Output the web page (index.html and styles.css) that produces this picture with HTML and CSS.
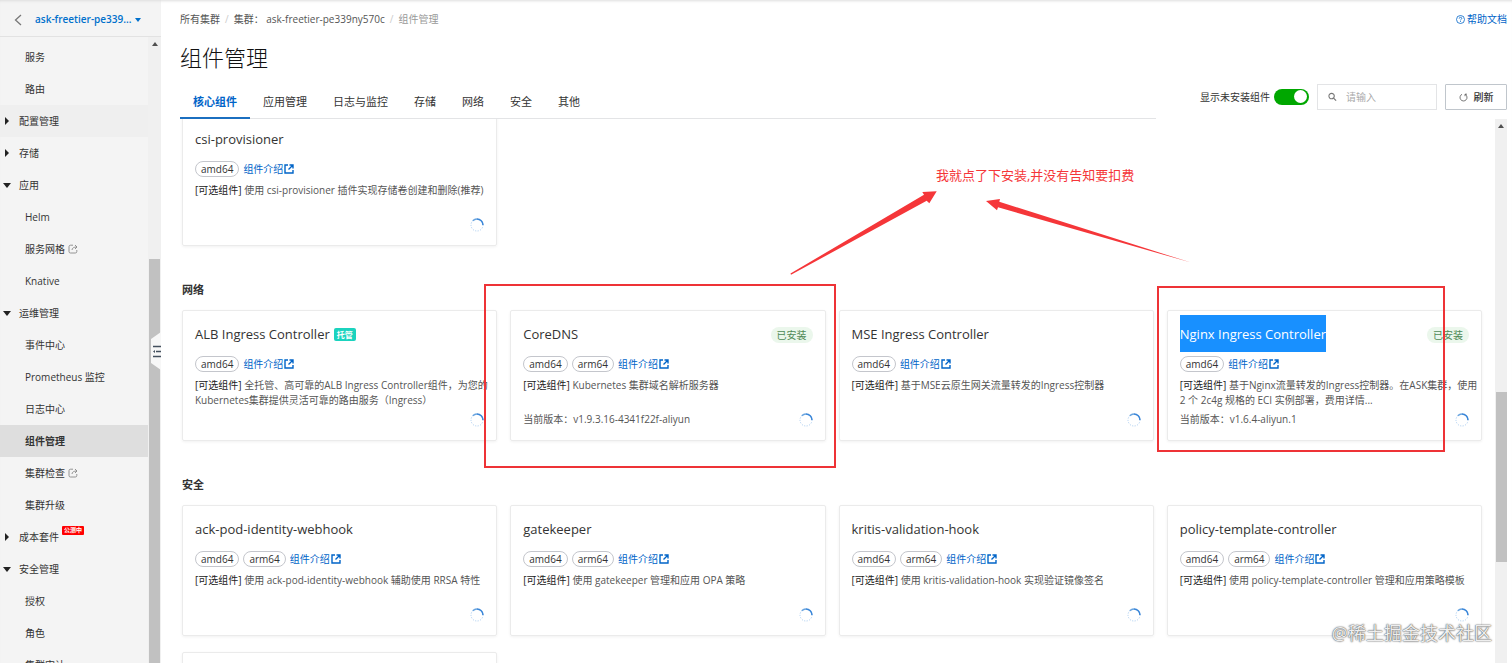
FILE: index.html
```html
<!DOCTYPE html>
<html lang="zh-CN">
<head>
    <meta charset="UTF-8">
    <meta name="viewport" content="width=device-width, initial-scale=1.0">
    <title>组件管理</title>
    <link rel="stylesheet" href="styles.css">
</head>
<body>
    <svg class="sprite" aria-hidden="true">
        <symbol id="icon-open" viewBox="0 0 10 10">
            <path d="M4 1H1v8h8V6M5.5 1H9v3.500M9 1 4.500 5.500" fill="none" stroke="currentColor" stroke-width="1.400"/>
        </symbol>
        <symbol id="icon-share" viewBox="0 0 10 10">
            <path d="M5 1.200H2.500Q1 1.200 1 2.700v4.800Q1 9 2.500 9h4.800Q8.800 9 8.800 7.500V6M4 6Q4.200 3 8.800 3M7 1l2 2-2 2" fill="none" stroke="currentColor" stroke-width="0.900"/>
        </symbol>
        <symbol id="icon-spin" viewBox="0 0 14 14">
            <circle cx="7" cy="7" r="6" fill="none" stroke="#a3c9f0" stroke-width="1" stroke-dasharray="1 1.500"/>
            <path d="M2.800 2.800A6 6 0 0 1 7 1" fill="none" stroke="#6aa5e0" stroke-width="1.400"/>
            <path d="M7 1a6 6 0 0 1 6 6" fill="none" stroke="#3a86d8" stroke-width="1.600"/>
        </symbol>
    </svg>

    <div class="layout">
        <aside class="sidebar">
            <div class="cluster">
                <button class="back" aria-label="返回">
                    <svg width="8" height="12" viewBox="0 0 8 12"><path d="M7 1 1.500 6 7 11" fill="none" stroke="#777" stroke-width="1.300"/></svg>
                </button>
                <button class="cluster-name">ask-freetier-pe339...<span class="caret"></span></button>
            </div>
            <div class="sidebar-body">
                <nav class="menu">
                    <a href="#" class="sub">服务</a>
                    <a href="#" class="sub">路由</a>
                    <a href="#" class="group closed hover">配置管理</a>
                    <a href="#" class="group closed">存储</a>
                    <a href="#" class="group">应用</a>
                    <a href="#" class="sub">Helm</a>
                    <a href="#" class="sub">服务网格<svg class="share"><use href="#icon-share"/></svg></a>
                    <a href="#" class="sub">Knative</a>
                    <a href="#" class="group">运维管理</a>
                    <a href="#" class="sub">事件中心</a>
                    <a href="#" class="sub">Prometheus 监控</a>
                    <a href="#" class="sub">日志中心</a>
                    <a href="#" class="sub active">组件管理</a>
                    <a href="#" class="sub">集群检查<svg class="share"><use href="#icon-share"/></svg></a>
                    <a href="#" class="sub">集群升级</a>
                    <a href="#" class="group closed">成本套件<span class="beta">公测中</span></a>
                    <a href="#" class="group">安全管理</a>
                    <a href="#" class="sub">授权</a>
                    <a href="#" class="sub">角色</a>
                    <a href="#" class="sub">集群审计</a>
                </nav>
                <div class="scrollbar">
                    <span class="arrow-up"></span>
                    <span class="thumb thumb-menu"></span>
                </div>
            </div>
            <button class="collapse" aria-label="收起">
                <svg width="12" height="38" viewBox="0 0 12 38">
                    <path d="M12 0 2 7v24l10 7z" fill="#f7f7f7"/>
                    <path d="M4 14.500h8M7 19.500h5M4 24.500h8" stroke="#44505e" stroke-width="1.500"/>
                    <path d="M4 19.500l2-1.500v3z" fill="#44505e"/>
                </svg>
            </button>
        </aside>

        <main class="main">
            <div class="topline">
                <div class="breadcrumb">
                    <a href="#">所有集群</a><i>/</i><a href="#">集群： ask-freetier-pe339ny570c</a><i>/</i><span>组件管理</span>
                </div>
                <a href="#" class="help">
                    <svg width="9" height="9" viewBox="0 0 9 9"><circle cx="4.500" cy="4.500" r="4" fill="none" stroke="currentColor" stroke-width="0.800"/><path d="M3.200 3.600q.1-1.300 1.300-1.300t1.300 1.100q0 .7-1.300 1.500v.4M4.500 6v.9" fill="none" stroke="currentColor" stroke-width="0.800"/></svg>
                    帮助文档
                </a>
            </div>
            <h1>组件管理</h1>

            <div class="toolbar">
                <div class="tabs">
                    <button class="tab active">核心组件</button>
                    <button class="tab">应用管理</button>
                    <button class="tab">日志与监控</button>
                    <button class="tab">存储</button>
                    <button class="tab">网络</button>
                    <button class="tab">安全</button>
                    <button class="tab">其他</button>
                </div>
                <div class="tools">
                    <label for="show-all">显示未安装组件</label>
                    <input type="checkbox" id="show-all" class="switch" checked>
                    <div class="search">
                        <svg width="10" height="10" viewBox="0 0 10 10"><circle cx="4" cy="4" r="3" fill="none" stroke="#777" stroke-width="1.200"/><path d="M6.200 6.200 9 9" stroke="#777" stroke-width="1.400"/></svg>
                        <input type="text" placeholder="请输入" aria-label="搜索">
                    </div>
                    <button class="refresh">
                        <svg width="9" height="9" viewBox="0 0 9 9"><path d="M3 1.300a3.500 3.500 0 1 0 3.200.1M6 3.200V1.200h2" fill="none" stroke="#555" stroke-width="0.800"/></svg>
                        刷新
                    </button>
                </div>
            </div>

            <div class="content">
                <div class="list">
                    <div class="cards cards-scrolled">
                        <article class="card">
                            <header><h3>csi-provisioner</h3></header>
                            <div class="tags"><span class="tag">amd64</span><a href="#">组件介绍<svg><use href="#icon-open"/></svg></a></div>
                            <p><b>[可选组件]</b> 使用 csi-provisioner 插件实现存储卷创建和删除(推荐)</p>
                            <footer><span></span><svg class="spin"><use href="#icon-spin"/></svg></footer>
                        </article>
                    </div>

                    <h2>网络</h2>
                    <div class="cards">
                        <article class="card">
                            <header><h3>ALB Ingress Controller<span class="managed">托管</span></h3></header>
                            <div class="tags"><span class="tag">amd64</span><a href="#">组件介绍<svg><use href="#icon-open"/></svg></a></div>
                            <p><b>[可选组件]</b> 全托管、高可靠的ALB Ingress Controller组件，为您的<br>Kubernetes集群提供灵活可靠的路由服务（Ingress）</p>
                            <footer><span></span><svg class="spin"><use href="#icon-spin"/></svg></footer>
                        </article>
                        <article class="card">
                            <header><h3>CoreDNS</h3><span class="installed">已安装</span></header>
                            <div class="tags"><span class="tag">amd64</span><span class="tag">arm64</span><a href="#">组件介绍<svg><use href="#icon-open"/></svg></a></div>
                            <p><b>[可选组件]</b> Kubernetes 集群域名解析服务器</p>
                            <footer><span>当前版本：v1.9.3.16-4341f22f-aliyun</span><svg class="spin"><use href="#icon-spin"/></svg></footer>
                        </article>
                        <article class="card">
                            <header><h3>MSE Ingress Controller</h3></header>
                            <div class="tags"><span class="tag">amd64</span><a href="#">组件介绍<svg><use href="#icon-open"/></svg></a></div>
                            <p><b>[可选组件]</b> 基于MSE云原生网关流量转发的Ingress控制器</p>
                            <footer><span></span><svg class="spin"><use href="#icon-spin"/></svg></footer>
                        </article>
                        <article class="card">
                            <header><h3 class="selected">Nginx Ingress Controller</h3><span class="installed">已安装</span></header>
                            <div class="tags"><span class="tag">amd64</span><a href="#">组件介绍<svg><use href="#icon-open"/></svg></a></div>
                            <p><b>[可选组件]</b> 基于Nginx流量转发的Ingress控制器。在ASK集群，使用<br>2 个 2c4g 规格的 ECI 实例部署，费用详情...</p>
                            <footer><span>当前版本：v1.6.4-aliyun.1</span><svg class="spin"><use href="#icon-spin"/></svg></footer>
                        </article>
                    </div>

                    <h2>安全</h2>
                    <div class="cards">
                        <article class="card">
                            <header><h3>ack-pod-identity-webhook</h3></header>
                            <div class="tags"><span class="tag">amd64</span><span class="tag">arm64</span><a href="#">组件介绍<svg><use href="#icon-open"/></svg></a></div>
                            <p><b>[可选组件]</b> 使用 ack-pod-identity-webhook 辅助使用 RRSA 特性</p>
                            <footer><span></span><svg class="spin"><use href="#icon-spin"/></svg></footer>
                        </article>
                        <article class="card">
                            <header><h3>gatekeeper</h3></header>
                            <div class="tags"><span class="tag">amd64</span><span class="tag">arm64</span><a href="#">组件介绍<svg><use href="#icon-open"/></svg></a></div>
                            <p><b>[可选组件]</b> 使用 gatekeeper 管理和应用 OPA 策略</p>
                            <footer><span></span><svg class="spin"><use href="#icon-spin"/></svg></footer>
                        </article>
                        <article class="card">
                            <header><h3>kritis-validation-hook</h3></header>
                            <div class="tags"><span class="tag">amd64</span><span class="tag">arm64</span><a href="#">组件介绍<svg><use href="#icon-open"/></svg></a></div>
                            <p><b>[可选组件]</b> 使用 kritis-validation-hook 实现验证镜像签名</p>
                            <footer><span></span><svg class="spin"><use href="#icon-spin"/></svg></footer>
                        </article>
                        <article class="card">
                            <header><h3>policy-template-controller</h3></header>
                            <div class="tags"><span class="tag">amd64</span><span class="tag">arm64</span><a href="#">组件介绍<svg><use href="#icon-open"/></svg></a></div>
                            <p><b>[可选组件]</b> 使用 policy-template-controller 管理和应用策略模板</p>
                            <footer><span></span><svg class="spin"><use href="#icon-spin"/></svg></footer>
                        </article>
                        <article class="card"></article>
                    </div>
                </div>
                <div class="scrollbar">
                    <span class="arrow-up"></span>
                    <span class="thumb thumb-list"></span>
                </div>
            </div>
        </main>
    </div>

    <!-- red marks drawn over the page -->
    <div class="mark mark-coredns"></div>
    <div class="mark mark-nginx"></div>
    <svg class="arrows" width="402" height="86" viewBox="0 0 402 86">
        <path d="M1 84.800 0.500 83.500 134 4.700 132.300 2 146.700 1.300 139.300 13.300 136.700 10.700z" fill="#f53639"/>
        <path d="M401 72.600 208 17.300 207 20.300 196 11 210 9 209.300 11.700z" fill="#f53639"/>
    </svg>
    <div class="note">我就点了下安装,并没有告知要扣费</div>
    <div class="watermark">@稀土掘金技术社区</div>
</body>
</html>
```
FILE: styles.css
```css
* {
    box-sizing: border-box;
}
body {
    margin: 0;
    height: 100vh;
    overflow: hidden;
    position: relative;
    font-family: "Open Sans", "Noto Sans CJK SC", sans-serif;
    font-size: 10px;
    line-height: 15px;
    color: #333;
    background-color: #fff;
}
a {
    color: inherit;
    text-decoration: none;
}
button {
    font: inherit;
    color: inherit;
    background: none;
    border: 0;
    padding: 0;
}
.sprite {
    position: absolute;
    width: 0;
    height: 0;
}
.layout {
    display: flex;
    height: 100%;
    box-shadow: inset 0 3px 3px -2px #ddd;
}

/* sidebar */
.sidebar {
    position: relative;
    flex: 0 0 161px;
    display: flex;
    flex-direction: column;
    background-color: #f4f4f4;
    box-shadow: inset 0 3px 3px -2px #ddd;
}
.cluster {
    display: flex;
    align-items: center;
    height: 37px;
    padding: 3px 0 0 14px;
    border-bottom: 1px solid #e2e2e2;
}
.back {
    display: flex;
    width: 21px;
}
.cluster-name {
    display: flex;
    align-items: center;
    gap: 4px;
    font-weight: 600;
    color: #0070cc;
}
.caret {
    border: 3px solid transparent;
    border-top: 4px solid #0070cc;
    border-bottom: 0;
}
.sidebar-body {
    flex: 1;
    display: flex;
    min-height: 0;
    overflow: hidden;
}
.menu {
    flex: 1;
    padding-top: 4px;
}
.menu a {
    display: flex;
    align-items: center;
    height: 32px;
}
.menu .sub {
    padding-left: 25px;
}
.menu .group {
    padding-left: 3px;
}
.menu .group::before {
    content: "";
    margin-right: 8px;
    border: 4px solid transparent;
    border-top: 5px solid #222;
    border-bottom: 0;
}
.menu .closed::before {
    margin: 0 10px 0 2px;
    border: 4px solid transparent;
    border-left: 4px solid #222;
    border-right: 0;
}
.menu .hover {
    background-color: #efefef;
}
.menu .active {
    background-color: #dedede;
    font-weight: 600;
}
.share {
    width: 10px;
    height: 10px;
    margin-left: 3px;
    color: #888;
}
.beta {
    align-self: flex-start;
    margin: 5px 0 0 3px;
    padding: 0 2px;
    font-size: 6px;
    line-height: 9px;
    font-weight: 600;
    color: #fff;
    background-color: #f00;
    border-radius: 1px;
}
.collapse {
    position: absolute;
    right: 0;
    top: 332px;
    width: 12px;
    height: 38px;
}
.collapse svg {
    display: block;
}

/* scrollbars */
.scrollbar {
    flex: 0 0 12px;
    display: flex;
    flex-direction: column;
    align-items: center;
    background-color: #f0f0f0;
}
.sidebar .scrollbar {
    flex-basis: 13px;
}
.arrow-up {
    margin-top: 5px;
    border: 3px solid transparent;
    border-bottom: 4px solid #505050;
    border-top: 0;
}
.thumb {
    width: 11px;
    background-color: #c1c1c1;
}
.thumb-menu {
    flex: 1;
    margin-top: 213px;
}
.thumb-list {
    height: 170px;
    margin-top: 264px;
}

/* main column */
.main {
    flex: 1;
    min-width: 0;
    display: flex;
    flex-direction: column;
    padding: 12px 5px 0 19px;
}
.topline {
    display: flex;
    justify-content: space-between;
}
.breadcrumb {
    color: #555;
}
.breadcrumb i {
    margin: 0 5px;
    font-style: normal;
    color: #ccc;
}
.breadcrumb span {
    color: #999;
}
.help {
    display: flex;
    align-items: center;
    gap: 2px;
    color: #0064c8;
}
h1 {
    margin: 13px 0 0;
    font-size: 22px;
    line-height: 34px;
    font-weight: 300;
    color: #111;
}
.toolbar {
    display: flex;
    align-items: flex-start;
    margin-top: 10px;
}
.tabs {
    flex: 1;
    display: flex;
    height: 35px;
    border-bottom: 1px solid #e3e4e6;
}
.tab {
    height: 35px;
    padding: 2px 13px 0;
    font-size: 11px;
    border-bottom: 2px solid transparent;
}
.tab.active {
    font-weight: 600;
    color: #0064c8;
    border-bottom-color: #1b6fc0;
}
.tools {
    display: flex;
    align-items: center;
    justify-content: flex-end;
    flex: 0 0 351px;
}
.switch {
    appearance: none;
    width: 35px;
    height: 16px;
    margin: 0 8px 0 4px;
    padding: 2px;
    background-color: #00a700;
    border-radius: 8px;
}
.switch::before {
    content: "";
    display: block;
    width: 13px;
    height: 13px;
    margin: -1px 0 0 auto;
    background-color: #fff;
    border-radius: 50%;
}
.search {
    display: flex;
    align-items: center;
    width: 120px;
    height: 26px;
    padding-left: 10px;
    border: 1px solid #e3e4e6;
}
.search input {
    width: 90px;
    margin-left: 9px;
    padding: 0;
    border: 0;
    outline: 0;
    font: inherit;
    background: none;
}
.search input::placeholder {
    color: #aaa;
}
.refresh {
    display: flex;
    align-items: center;
    justify-content: center;
    gap: 6px;
    width: 62px;
    height: 26px;
    margin-left: 8px;
    font-weight: 500;
    border: 1px solid #c0c6cc;
    border-radius: 1px;
}

/* component list */
.content {
    flex: 1;
    display: flex;
    min-height: 0;
    overflow: hidden;
}
.list {
    flex: 1;
    min-width: 0;
    padding: 0 13px 0 2px;
}
.cards {
    display: grid;
    grid-template-columns: repeat(4, 1fr);
    gap: 16px 13px;
}
.cards-scrolled {
    margin-top: -4px;
}
.card {
    display: flex;
    flex-direction: column;
    min-width: 0;
    height: 131px;
    padding: 4px 12px 13px;
    border: 1px solid #ebebeb;
    border-radius: 2px;
    box-shadow: 0 1px 3px rgba(0,0,0,0.06);
}
.card header {
    display: flex;
    align-items: center;
    justify-content: space-between;
}
h2 {
    margin: 36px 0 12px;
    font-size: 11px;
    line-height: 16px;
    font-weight: 600;
}
h3 {
    display: flex;
    align-items: center;
    height: 37px;
    margin: 0;
    padding-top: 1px;
    font-size: 13px;
    font-weight: 400;
}
.selected {
    color: #fff;
    background-color: #1890ff;
}
.managed {
    margin-left: 4px;
    padding: 0 3px;
    font-size: 8px;
    line-height: 13px;
    font-weight: 600;
    color: #fff;
    background-color: #1bd3be;
    border-radius: 2px;
}
.installed {
    margin-top: 2px;
    padding: 0 6px;
    line-height: 16px;
    color: #4f8a56;
    background-color: #ebf7ec;
    border-radius: 8px;
}
.tags {
    display: flex;
    align-items: center;
    gap: 4px;
    height: 16px;
    margin-top: 4px;
}
.tag {
    padding: 0 5px;
    line-height: 14px;
    border: 1px solid #c4c6cc;
    border-radius: 8px;
}
.tags a {
    display: flex;
    align-items: center;
    gap: 1px;
    color: #0064c8;
}
.tags a svg {
    width: 10px;
    height: 10px;
}
.card p {
    margin: 6px 0 0;
    white-space: nowrap;
    color: #555;
}
.card b {
    font-weight: 400;
    color: #222;
}
.card footer {
    display: flex;
    align-items: center;
    justify-content: space-between;
    height: 15px;
    margin-top: auto;
    color: #555;
}
.spin {
    width: 14px;
    height: 14px;
}

/* marks over the page */
.mark {
    position: absolute;
    border: 2px solid #ee3336;
}
.mark-coredns {
    left: 484px;
    top: 284px;
    width: 352px;
    height: 184px;
}
.mark-nginx {
    left: 1157px;
    top: 286px;
    width: 288px;
    height: 166px;
}
.arrows {
    position: absolute;
    left: 790px;
    top: 190px;
}
.note {
    position: absolute;
    left: 936px;
    top: 165px;
    font-size: 13px;
    line-height: 20px;
    color: #f53639;
}
.watermark {
    position: absolute;
    right: 20px;
    bottom: 17px;
    font-size: 18px;
    line-height: 26px;
    color: #eee;
    text-shadow: 0 0 1px #444, 0 0 2px #666;
}
```
